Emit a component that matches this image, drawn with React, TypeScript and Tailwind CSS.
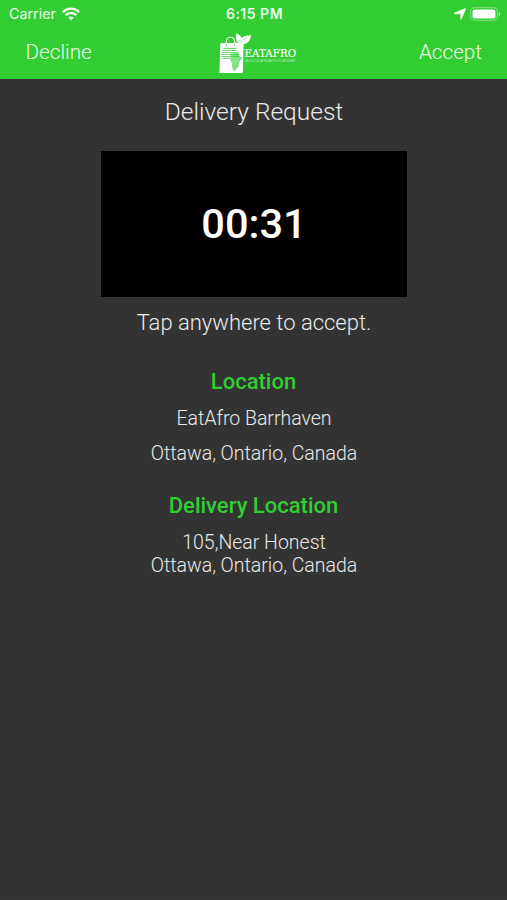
interface Section {
    title: string
    lines: string[]
    className: string
    gap: string
}

const sections: Section[] = [
    {
        title: "Location",
        lines: ["EatAfro Barrhaven", "Ottawa, Ontario, Canada"],
        className: "mt-[27px]",
        gap: "gap-3",
    },
    {
        title: "Delivery Location",
        lines: ["105,Near Honest", "Ottawa, Ontario, Canada"],
        className: "mt-[25px]",
        gap: "gap-0",
    },
]

const WifiIcon = () => (
    <svg width="18" height="14" viewBox="0 0 18 14" fill="none" stroke="white" strokeWidth="2.4">
        <path d="M0.9 5.1C5.4.5 12.6.5 17.1 5.1" />
        <path d="M3.7 8.1c3-3 7.6-3 10.6 0" />
        <path d="M6.3 10.5c1.5-1.4 3.9-1.4 5.4 0L9 13.4z" fill="white" stroke="none" />
    </svg>
)

const LocationIcon = () => (
    <svg width="12" height="12" viewBox="0 0 12 12" fill="white" stroke="white" strokeWidth=".5">
        <path d="M11 .6c.5-.2.8.1.6.6L7.4 11c-.2.5-.8.5-.8-.1V6.2c0-.3-.1-.4-.4-.4H.9C.2 5.8.2 5.1.8 4.8z" />
    </svg>
)

const BatteryIcon = () => (
    <svg width="31" height="14" viewBox="0 0 31 14">
        <rect x=".6" y=".6" width="26.8" height="12.8" rx="4" fill="none" stroke="white" strokeOpacity=".35" strokeWidth="1.1" />
        <rect x="2.6" y="2.4" width="22.8" height="9.2" rx="2.2" fill="white" />
        <path d="M28.7 4.8c2.2.7 2.2 3.7 0 4.4z" fill="white" fillOpacity=".5" />
    </svg>
)

const Logo = () => (
    <svg width="80" height="42" viewBox="0 0 80 42" fill="white">
        {/* bag */}
        <path d="M1.3 11.3 24.7 10.5 23.8 41H.5z" />
        <path d="M7.4 12V9.4a4.1 4.1 0 0 1 8.2 0V12" fill="none" stroke="white" strokeWidth="1.1" />
        <path d="M7.4 12v2.2M15.6 12v2.2" fill="none" stroke="#32cd32" strokeWidth=".7" />
        {/* leaves */}
        <path d="M19.7 12.3C20 5.6 25.4 3.5 32.2 3.3 31 9.8 26.6 13.6 21.5 11.6z" />
        <path d="M19.2 11.2C16.4 7.7 16.4 4.6 17.4 1.2c3.4 1.7 5 3.4 5.2 5.4-1.5 1-2.7 2.4-3.4 4.6z" />
        <path d="M20.5 11.4c2-2.8 4.4-4.7 7.8-5.9" fill="none" stroke="#32cd32" strokeWidth=".5" />
        {/* striped continent */}
        <path d="M4.5 16.5h13M3.5 18.5h15M2.5 20.5h17M2.5 22.5h18M2.5 24.5h18M3.5 26.5h8" fill="none" stroke="#32cd32" strokeOpacity=".75" />
        <path d="M11.5 21.5 19.5 21l1.5 4h2l-.2 1.8-2.9 4.1.3 3.2-2.2 2-1.2 2.1-2.4.6-1.5-3.9.3-3.6-1.8-2.9z" fill="#32cd32" fillOpacity=".6" />
        <text x="25.6" y="24.9" fontSize="10.6" fontFamily="'DejaVu Serif', serif" fontWeight="400" textLength="51.5" lengthAdjust="spacingAndGlyphs" stroke="white" strokeWidth=".15">EATAFRO</text>
        <text x="25.6" y="30.4" fontSize="2.8" fontFamily="'Liberation Sans', sans-serif" fontWeight="400" fillOpacity=".7" textLength="51" lengthAdjust="spacingAndGlyphs">DELICIOUS AFRICAN FOOD DELIVERY</text>
    </svg>
)

const StatusBar = () => (
    <div className="grid h-7 grid-cols-3 items-center pr-[6px] pl-[9px] font-['Inter',sans-serif] text-white/90">
        <div className="flex items-center gap-[6px] text-[14.3px] font-normal">
            <span>Carrier</span>
            <WifiIcon />
        </div>
        <span className="-mt-px pr-px text-center text-[14px] font-semibold tracking-[0.5px]">6:15 PM</span>
        <div className="flex items-center justify-end gap-1">
            <LocationIcon />
            <BatteryIcon />
        </div>
    </div>
)

export default function App() {
    return (
        <div className="flex h-[900px] w-[507px] flex-col border-b border-[#352f33] bg-[#333] text-center font-['Roboto',sans-serif] font-light text-white/90">
            <header className="h-[79px] bg-[#32cd32]">
                <StatusBar />
                <div className="grid h-[49px] grid-cols-[1fr_90px_1fr] items-center pt-px pr-[25px] pl-[25.5px] text-[20.7px]">
                    <span className="text-left">Decline</span>
                    <div className="-mt-px flex justify-end">
                        <Logo />
                    </div>
                    <span className="text-right">Accept</span>
                </div>
            </header>
            <main className="flex flex-col items-center">
                <h1 className="mt-[17px] pl-px text-[24.5px] leading-8">Delivery Request</h1>
                <div className="mt-[23px] flex h-[146px] w-[306px] items-center justify-center bg-black pl-px text-[41.5px] font-medium text-white">
                    00:31
                </div>
                <p className="mt-[10px] pl-px text-[22px] leading-8">Tap anywhere to accept.</p>
                {sections.map(({ title, lines, className, gap }) => (
                    <section key={title} className={className}>
                        <h2 className="text-[22px] leading-8 font-medium text-[#32cd32]">{title}</h2>
                        <div className={`mt-[9px] flex flex-col pl-px text-[19.5px] leading-[23px] ${gap}`}>
                            {lines.map((line) => (
                                <p key={line}>{line}</p>
                            ))}
                        </div>
                    </section>
                ))}
            </main>
        </div>
    )
}
